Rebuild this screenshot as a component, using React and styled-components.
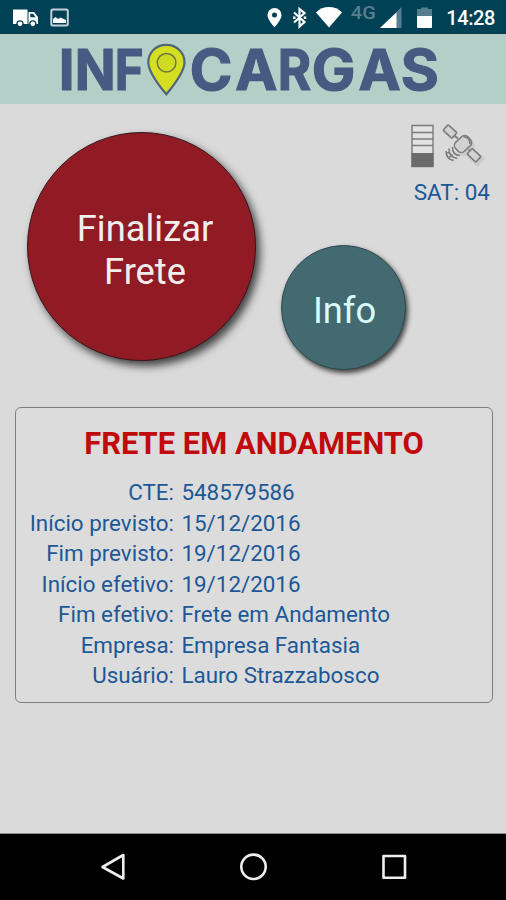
import React from "react";
import styled, { createGlobalStyle } from "styled-components";

const GlobalStyle = createGlobalStyle`
  * { box-sizing: border-box; }
  body { margin: 0; background: #dadada; font-family: Roboto, "Liberation Sans", sans-serif; }
  svg { display: block; }
`;

const Screen = styled.div`
  width: 506px;
  height: 900px;
  display: flex;
  flex-direction: column;
  background: #dadada;
  overflow: hidden;
`;

const StatusBar = styled.header`
  height: 34px;
  flex: none;
  background: #004155;
  border-bottom: 1px solid #0f3a4e;
`;

const Brand = styled.div`
  height: 70px;
  flex: none;
  background: #b3cfc7;
`;

const Main = styled.main`
  flex: 1;
  display: flex;
  flex-direction: column;
  border-bottom: 1px solid #8d8d8d;
`;

const ActionArea = styled.section`
  height: 303px;
  display: grid;
  grid-template-columns: 254px 126px 83px;
  padding: 28px 0 0 27px;
`;

const RoundButton = styled.button`
  width: ${(p) => p.$size}px;
  height: ${(p) => p.$size}px;
  margin: ${(p) => p.$top || 0}px 0 0;
  padding: ${(p) => p.$pad};
  border: 1px solid ${(p) => p.$edge};
  border-radius: 50%;
  background: ${(p) => p.$fill};
  color: ${(p) => p.$ink};
  font: 400 36.3px/43px Roboto, sans-serif;
  box-shadow: ${(p) => p.$shadow};
`;

const Satellite = styled.div`
  display: flex;
  flex-direction: column;
  align-items: flex-end;
  margin-top: -11px;
`;

const SatText = styled.div`
  margin-top: 9px;
  color: #1d5896;
  font-size: 22.500px;
  line-height: 28px;
  white-space: nowrap;
`;

const Card = styled.section`
  width: 478px;
  height: 296px;
  margin-left: 15px;
  border: 1.5px solid #7d7d7d;
  border-radius: 6px;
  background: #dcdcdc;
`;

const CardTitle = styled.h1`
  margin: 18px 0 15px;
  text-align: center;
  color: #c00a0c;
  font-size: 30.9px;
  line-height: 36px;
  font-weight: 700;
  white-space: nowrap;
`;

const Details = styled.dl`
  margin: 0;
  display: grid;
  grid-template-columns: 158px 1fr;
  grid-auto-rows: 30.5px;
  column-gap: 7.4px;
  color: #1d5896;
  font-size: 22.4px;
  line-height: 30px;
  white-space: nowrap;
`;

const Label = styled.dt`
  text-align: right;
`;

const Value = styled.dd`
  margin: 0;
`;

const NavBar = styled.nav`
  height: 66px;
  flex: none;
  background: #000;
`;

const rows = [
  ["CTE:", "548579586"],
  ["Início previsto:", "15/12/2016"],
  ["Fim previsto:", "19/12/2016"],
  ["Início efetivo:", "19/12/2016"],
  ["Fim efetivo:", "Frete em Andamento"],
  ["Empresa:", "Empresa Fantasia"],
  ["Usuário:", "Lauro Strazzabosco"],
];

const StatusIcons = () => (
  <svg width="506" height="33" viewBox="0 0 506 33" fill="#fff">
    <path d="M13 9.500h14.500V24H13z" />
    <path fillRule="evenodd" d="M28.500 12H34l4 5v7h-9.500zM30.300 13.800v3.400h5.300l-2.500-3.400z" />
    <circle cx="20" cy="23.800" r="3" stroke="#004155" strokeWidth="1.300" />
    <circle cx="32.800" cy="23.800" r="3" stroke="#004155" strokeWidth="1.300" />
    <rect x="51.300" y="9.500" width="16.500" height="16" rx="1.500" fill="none" stroke="#c5d0d7" strokeWidth="2" />
    <path d="M53 23v-4l2.500-2 2.500 2 2.500-1.500L66 20v3z" />
    <path fillRule="evenodd" d="M274.500 8a7 7 0 0 0-7 7c0 4.800 7 12.300 7 12.300s7-7.500 7-12.300a7 7 0 0 0-7-7zm0 4.400a2.500 2.500 0 1 1 0 5 2.500 2.500 0 0 1 0-5z" />
    <path d="M294 12.500l10.500 9.500-5 4.500V9l5 4-10.500 9.500" fill="none" stroke="#fff" strokeWidth="2.200" />
    <path d="M293 16.500h2.500V19H293zM303.800 16.500h2.500V19h-2.500z" />
    <path d="M316 12.500C323 5.300 335 5.300 342 12.500L329 27.500z" />
    <text x="350.800" y="19" fill="#557f8e" fontFamily="Roboto" fontWeight="500" fontSize="17.500" textLength="25" lengthAdjust="spacingAndGlyphs">4G</text>
    <path d="M401.500 7v21H380z" fill="#557f8e" />
    <path d="M396.500 12.500V28H380z" />
    <path d="M417 9h4V7.500h7V9h4v7h-15z" fill="#557f8e" />
    <path d="M417 16h15v11a1 1 0 0 1-1 1h-13a1 1 0 0 1-1-1z" />
    <text x="446.300" y="25" fontFamily="Roboto" fontWeight="500" fontSize="20" textLength="49">14:28</text>
  </svg>
);

/* [letter, x offset, horizontal scale] */
const logoLetters = [
  ["I", 58.8, 1], ["N", 74.8, 0.95], ["F", 114.8, 0.87],
  ["C", 189.7, 1.02], ["A", 235.3, 1], ["R", 277.7, 0.9],
  ["G", 311.8, 1.03], ["A", 358.5, 1], ["S", 400.700, 1.03],
];

const Logo = () => (
  <svg width="506" height="70" viewBox="0 0 506 70" role="img" aria-label="INFOCARGAS">
    <g fill="#475a82" stroke="#475a82" strokeWidth="1.200" fontFamily="Inter" fontWeight="700" fontSize="56.500">
      {logoLetters.map(([ch, x, sx], i) => (
        <text key={i} transform={`translate(${x} 55.5) scale(${sx} 1)`}>{ch}</text>
      ))}
    </g>
    <path d="M166.300 10.800c-10.600 0-18 7.900-18 17.400 0 9.600 11.500 24.300 18 32.100 6.500-7.800 18.200-22.500 18.200-32.100 0-9.500-7.600-17.400-18.200-17.400z" fill="#d3df20" stroke="#53657c" strokeWidth="2.200" />
    <circle cx="166.600" cy="28.700" r="9.300" fill="#cfdb22" stroke="#6e793b" strokeWidth="1.500" />
  </svg>
);

const SignalIcons = () => (
  <svg width="80" height="48" viewBox="410 121 80 48" fill="none" stroke="#7c7c7c">
    <path d="M412 125.500h21v41h-21z" fill="#e2e2e2" strokeWidth="1.400" />
    <path d="M412 132.500h21M412 139h21M412 145.500h21" strokeWidth="1.400" />
    <path d="M411.500 153h22v14h-22z" fill="#6b6b6b" stroke="none" />
    <g stroke="#bdbdbd" fill="#c6c6c6" strokeWidth="2.500" opacity=".55">
      <rect x="-6" y="-4" width="12" height="8" transform="translate(476 158) rotate(43)" />
      <rect x="-8" y="-6" width="16" height="12" rx="5" transform="translate(465.500 147) rotate(-43)" />
    </g>
    <g strokeWidth="1.600" fill="#d2d2d2">
      <path d="M453.500 135l4.500 3.500M468.500 149.500l2.500 2" />
      <rect x="-6" y="-3.800" width="12" height="7.600" rx="1" transform="translate(450 131.500) rotate(43)" />
      <rect x="-6" y="-3.800" width="12" height="7.600" rx="1" transform="translate(474 155.300) rotate(43)" />
      <rect x="-8.500" y="-6.200" width="17" height="12.400" rx="4.500" transform="translate(463 144) rotate(-43)" />
      <g fill="none">
        <path d="M463.500 136.500c4 .5 6.500 3.500 6.500 7.500" />
        <path d="M452.500 147c-.5 5 2.500 8.500 7.500 8.500M449 148.500c-.5 5.500 3 9.500 8.500 10M446 151c0 5 2.500 8.500 7.500 9.500M445.500 152l4.500 1M448.500 158l4-3.500" />
      </g>
    </g>
  </svg>
);

const NavIcons = () => (
  <svg width="506" height="66" viewBox="0 834 506 66" fill="none" stroke="#eee" strokeWidth="2.600" strokeLinejoin="round">
    <path d="M102.500 867L123.300 855v23.500z" />
    <circle cx="253.500" cy="866.800" r="12.200" />
    <rect x="383.500" y="856" width="21.500" height="21.800" />
  </svg>
);

export default function App() {
  return (
    <Screen>
      <GlobalStyle />
      <StatusBar><StatusIcons /></StatusBar>
      <Brand><Logo /></Brand>
      <Main>
        <ActionArea>
          <RoundButton $size={229} $fill="#901b24" $edge="#35151b" $ink="#f1eeee" $pad="6px 0 0 7px" $shadow="4px 5px 8px rgba(0,0,0,.7)">
            Finalizar<br />Frete
          </RoundButton>
          <RoundButton $size={125} $top={113} $fill="#436a70" $edge="#2c4a50" $ink="#d9fbfb" $pad="5px 0 0 2px" $shadow="2px 3px 5px rgba(0,0,0,.7)">
            Info
          </RoundButton>
          <Satellite>
            <SignalIcons />
            <SatText>SAT: 04</SatText>
          </Satellite>
        </ActionArea>
        <Card>
          <CardTitle>FRETE EM ANDAMENTO</CardTitle>
          <Details>
            {rows.map(([label, value]) => (
              <React.Fragment key={label}>
                <Label>{label}</Label>
                <Value>{value}</Value>
              </React.Fragment>
            ))}
          </Details>
        </Card>
      </Main>
      <NavBar><NavIcons /></NavBar>
    </Screen>
  );
}
